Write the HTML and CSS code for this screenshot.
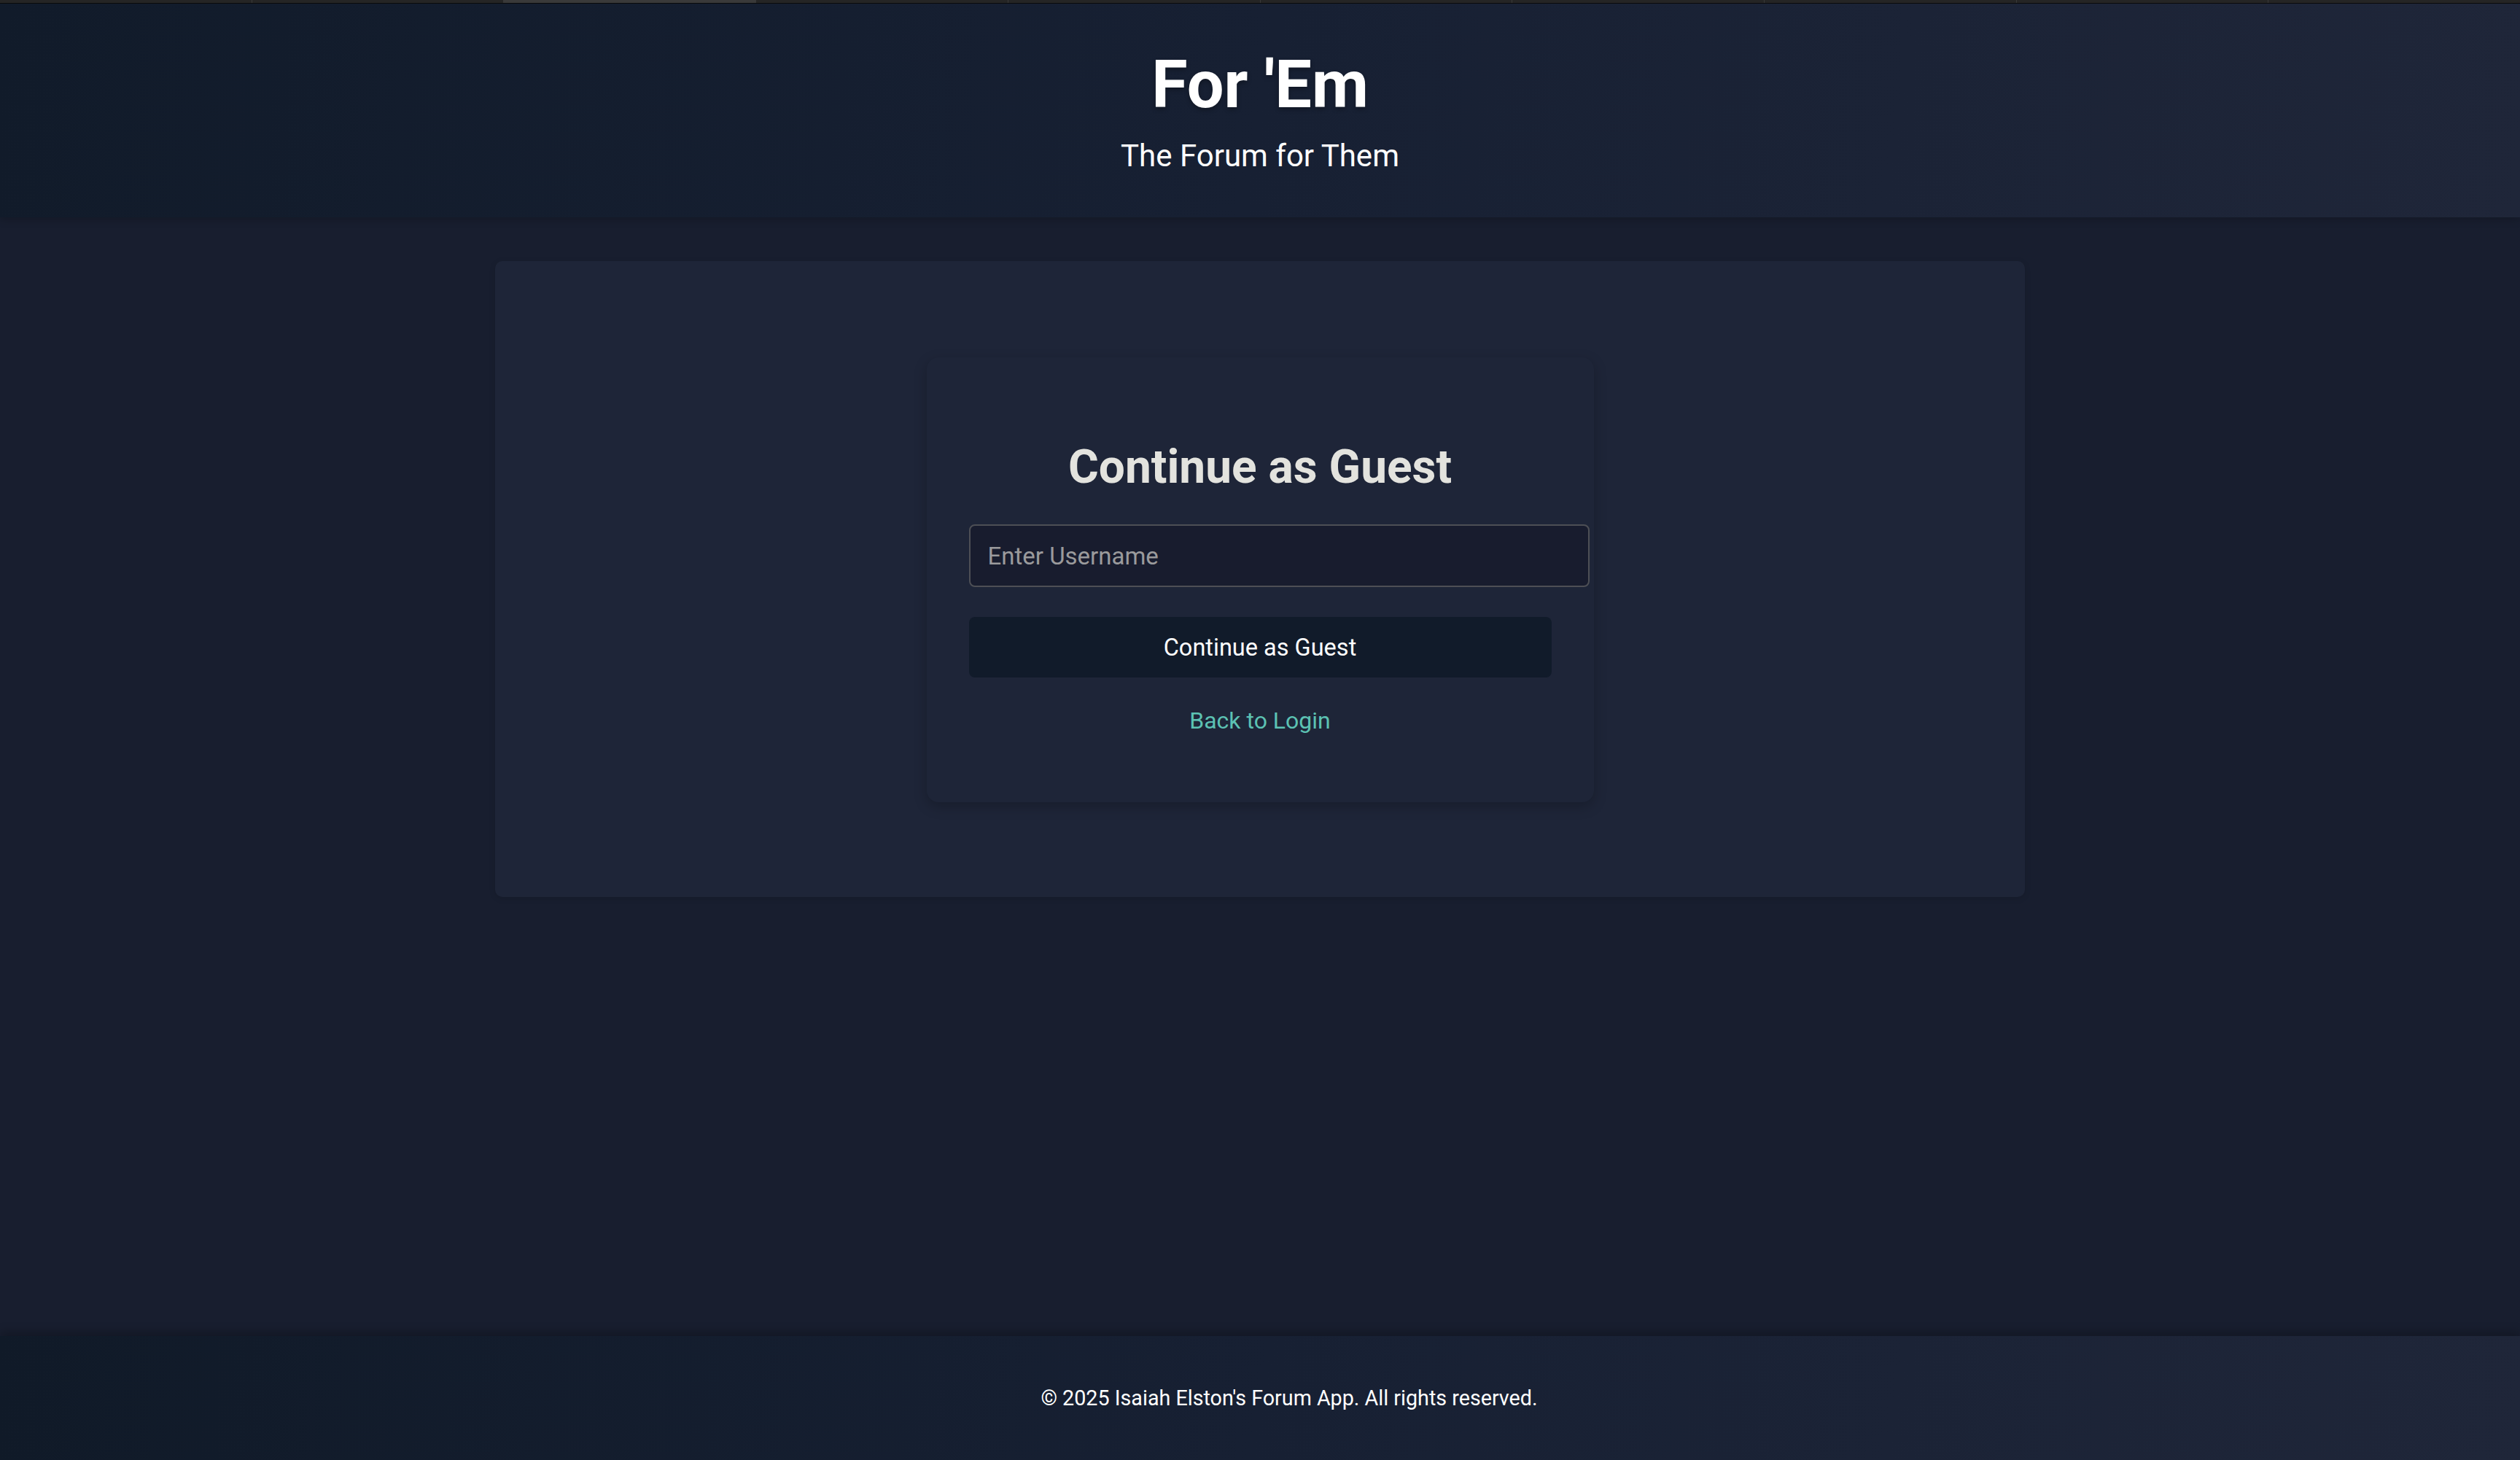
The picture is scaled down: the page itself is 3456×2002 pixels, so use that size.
FILE: index.html
```html
<!DOCTYPE html>
<html lang="en">
<head>
<meta charset="utf-8">
<title>For 'Em</title>
<link rel="stylesheet" href="styles.css">
</head>
<body>
<div class="tabstrip">
  <span class="tab"></span><span class="tab"></span><span class="tab active"></span><span class="tab"></span><span class="tab"></span>
  <span class="tab"></span><span class="tab"></span><span class="tab"></span><span class="tab"></span><span class="tab"></span>
</div>
<header class="site-header">
  <h1 class="site-title">For 'Em</h1>
  <p class="site-tagline">The Forum for Them</p>
</header>
<main class="site-main">
  <section class="panel">
    <div class="guest-card">
      <h2 class="guest-title">Continue as Guest</h2>
      <input class="guest-input" type="text" placeholder="Enter Username">
      <button class="guest-button" type="button">Continue as Guest</button>
      <a class="guest-link" href="#">Back to Login</a>
    </div>
  </section>
</main>
<footer class="site-footer">
  <p class="footer-text">© 2025 Isaiah Elston's Forum App. All rights reserved.</p>
</footer>
</body>
</html>
```
FILE: styles.css
```css
* { box-sizing: border-box; }
html, body { height: 100%; }
body {
  margin: 0;
  min-height: 100vh;
  display: flex;
  flex-direction: column;
  background: #181e2f;
  font-family: Roboto, "Liberation Sans", sans-serif;
  color: #ffffff;
}
.tabstrip {
  display: flex;
  height: 4px;
  background: #101010;
  border-bottom: 1px solid #0b0b0b;
  box-sizing: content-box;
}
.tab {
  flex: 1;
  background: #262626;
  border-left: 1px solid #3a3a3a;
}
.tab:first-child { border-left: none; }
.tab.active { background: #3b3b3b; }
.site-header {
  background: linear-gradient(100deg, #111b2a 0%, #172033 50%, #1f2639 100%);
  padding: 59px 0 60px;
  text-align: center;
  box-shadow: 0 4px 10px rgba(0, 0, 0, 0.18);
  position: relative;
  z-index: 1;
}
.site-title {
  margin: 0;
  font-size: 90px;
  font-weight: 700;
  line-height: 105px;
  color: #ffffff;
  text-shadow: 0 3px 6px rgba(0, 0, 0, 0.3);
}
.site-tagline {
  margin: 20px 0 0;
  font-size: 42px;
  line-height: 49px;
  color: #ffffff;
}
.site-main {
  flex: 1;
  display: flex;
  flex-direction: column;
  align-items: center;
  padding-top: 60px;
}
.panel {
  width: 2098px;
  background: #1e2538;
  border-radius: 10px;
  padding: 132px 0 130px;
  display: flex;
  justify-content: center;
  box-shadow: 0 2px 8px rgba(0, 0, 0, 0.12);
}
.guest-card {
  width: 915px;
  background: #1e2538;
  border-radius: 16px;
  padding: 58px 58px 93px;
  display: flex;
  flex-direction: column;
  align-items: flex-start;
  box-shadow: 0 6px 18px rgba(0, 0, 0, 0.22);
}
.guest-title {
  align-self: stretch;
  margin: 55px 0 41px;
  text-align: center;
  font-size: 64px;
  line-height: 75px;
  font-weight: 700;
  color: #e3e3de;
}
.guest-input {
  box-sizing: content-box;
  width: 100%;
  height: 38px;
  padding: 22px 24px;
  border: 2px solid #4d4f55;
  border-radius: 8px;
  background: #181c2e;
  color: #ffffff;
  font-family: Roboto, "Liberation Sans", sans-serif;
  font-size: 33px;
  outline: none;
}
.guest-input::placeholder { color: #9a9a9c; }
.guest-button {
  width: 100%;
  height: 83px;
  margin-top: 41px;
  border: none;
  border-radius: 8px;
  background: #111b2a;
  color: #ffffff;
  font-family: Roboto, "Liberation Sans", sans-serif;
  font-size: 32.5px;
  cursor: pointer;
}
.guest-link {
  align-self: stretch;
  margin-top: 40px;
  text-align: center;
  font-size: 32px;
  line-height: 38px;
  color: #5cc2b3;
  text-decoration: none;
}
.site-footer {
  height: 170px;
  background: linear-gradient(100deg, #101a28 0%, #172033 50%, #1f2639 100%);
  box-shadow: 0 -6px 12px rgba(0, 0, 0, 0.22);
  display: flex;
  align-items: center;
  justify-content: center;
  padding-left: 80px;
}
.footer-text {
  margin: 0;
  font-size: 28.7px;
  line-height: 34px;
  color: #ffffff;
}
```
